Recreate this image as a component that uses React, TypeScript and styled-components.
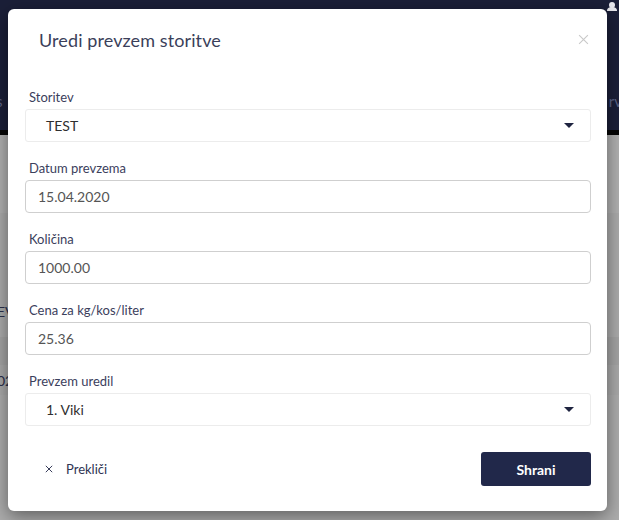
import React from "react";
import styled, { createGlobalStyle } from "styled-components";

const Global = createGlobalStyle`
  html, body { margin: 0; padding: 0; }
  body {
    width: 619px;
    height: 520px;
    overflow: hidden;
    background: #a9a9a9;
    font-family: Lato, "Noto Sans", sans-serif;
  }
  * { box-sizing: border-box; }
`;

const Page = styled.div`
  position: relative;
  width: 619px;
  height: 520px;
  overflow: hidden;
  background: #acacac;
`;

const TopBar = styled.header`
  height: 135px;
  background: #1b1f38;
  border-bottom: 5px solid #060606;
  display: flex;
  align-items: flex-end;
  justify-content: space-between;
  padding-bottom: 20px;
  color: #5d6486;
  font-size: 15px;
`;

const UserIcon = styled.div`
  position: absolute;
  top: -4px;
  right: 2px;
  width: 10px;
  height: 14px;
`;

const BgContent = styled.main`
  display: flex;
  flex-direction: column;
`;

const BgRow = styled.div<{ $h: number; $bg: string }>`
  height: ${(p) => p.$h}px;
  background: ${(p) => p.$bg};
  display: flex;
  align-items: center;
  color: #2a2f4a;
  font-size: 14px;
  margin-left: -3px;
`;

const Overlay = styled.div`
  position: absolute;
  inset: 0;
  padding: 9px 12px 9px 8px;
  display: flex;
`;

const Modal = styled.section`
  flex: 1;
  background: #fff;
  border-radius: 6px;
  box-shadow: 0 5px 18px rgba(0, 0, 0, 0.45);
  display: flex;
  flex-direction: column;
`;

const Header = styled.div`
  display: flex;
  align-items: center;
  justify-content: space-between;
  padding: 20px 17px 0 31px;
`;

const Title = styled.h4`
  margin: 0;
  font-size: 18px;
  line-height: 22px;
  font-weight: 400;
  letter-spacing: 0.1px;
  color: #3b3f5a;
`;

const CloseBtn = styled.button`
  border: 0;
  background: none;
  padding: 0;
  width: 12px;
  height: 12px;
  display: flex;
  cursor: pointer;
`;

const Body = styled.div`
  padding: 37px 16px 0 17px;
  display: flex;
  flex-direction: column;
`;

const Group = styled.div`
  display: flex;
  flex-direction: column;
  margin-bottom: 17px;
`;

const Label = styled.label`
  font-size: 13px;
  line-height: 18px;
  color: #3b405c;
  padding-left: 4px;
  margin-bottom: 3px;
`;

const Input = styled.div`
  height: 33px;
  border: 1px solid #cfcfcf;
  border-radius: 4px;
  padding: 0 12px;
  display: flex;
  align-items: center;
  font-size: 14px;
  color: #555;
`;

const Select = styled.div`
  height: 33px;
  border: 1px solid #ececec;
  border-radius: 3px;
  padding: 0 16px 0 20px;
  display: flex;
  align-items: center;
  justify-content: space-between;
  font-size: 14px;
  color: #2f2f2f;
`;

const Caret = styled.span`
  width: 0;
  height: 0;
  border-left: 5px solid transparent;
  border-right: 5px solid transparent;
  border-top: 5px solid #1f2440;
`;

const Footer = styled.div`
  display: flex;
  align-items: center;
  justify-content: space-between;
  padding: 9px 16px 0 37px;
`;

const CancelBtn = styled.button`
  border: 0;
  background: none;
  display: flex;
  align-items: center;
  gap: 13px;
  font-family: inherit;
  font-size: 13px;
  color: #2f3453;
  padding: 0;
  cursor: pointer;
`;

const SaveBtn = styled.button`
  width: 110px;
  height: 34px;
  border: 0;
  border-radius: 3px;
  background: #21284a;
  color: #fff;
  font-family: inherit;
  font-weight: 700;
  font-size: 14px;
  cursor: pointer;
`;

const X = ({ size, color, w }: { size: number; color: string; w: number }) => (
  <svg width={size} height={size} viewBox="0 0 10 10">
    <path d="M1 1L9 9M9 1L1 9" stroke={color} strokeWidth={w} fill="none" />
  </svg>
);

const fields: { label: string; value: string; kind: "select" | "input" }[] = [
  { label: "Storitev", value: "TEST", kind: "select" },
  { label: "Datum prevzema", value: "15.04.2020", kind: "input" },
  { label: "Količina", value: "1000.00", kind: "input" },
  { label: "Cena za kg/kos/liter", value: "25.36", kind: "input" },
  { label: "Prevzem uredil", value: "1. Viki", kind: "select" },
];

export default function App() {
  return (
    <>
      <Global />
      <Page>
        <TopBar>
          <span style={{ marginLeft: -4 }}>s</span>
          <span style={{ marginRight: -3 }}>rv</span>
          <UserIcon>
            <svg width="10" height="14" viewBox="0 0 10 14">
              <circle cx="5" cy="8" r="3" fill="#e8e8ee" />
              <path d="M0 14c0-3 2-4 5-4s5 1 5 4z" fill="#e8e8ee" />
            </svg>
          </UserIcon>
        </TopBar>
        <BgContent>
          <BgRow $h={78} $bg="#b0b0b0" />
          <BgRow $h={124} $bg="#ababab">
            <span style={{ marginTop: 72 }}>EV</span>
          </BgRow>
          <BgRow $h={28} $bg="#a4a4a4" />
          <BgRow $h={30} $bg="#a9a9a9">02</BgRow>
          <BgRow $h={120} $bg="#acacac" />
        </BgContent>
        <Overlay>
          <Modal>
            <Header>
              <Title>Uredi prevzem storitve</Title>
              <CloseBtn aria-label="Zapri">
                <X size={11} color="#c9c9c9" w={1} />
              </CloseBtn>
            </Header>
            <Body>
              {fields.map((f) => (
                <Group key={f.label}>
                  <Label>{f.label}</Label>
                  {f.kind === "select" ? (
                    <Select>
                      <span>{f.value}</span>
                      <Caret />
                    </Select>
                  ) : (
                    <Input>{f.value}</Input>
                  )}
                </Group>
              ))}
            </Body>
            <Footer>
              <CancelBtn>
                <X size={8} color="#2f3453" w={1.2} />
                Prekliči
              </CancelBtn>
              <SaveBtn>Shrani</SaveBtn>
            </Footer>
          </Modal>
        </Overlay>
      </Page>
    </>
  );
}
